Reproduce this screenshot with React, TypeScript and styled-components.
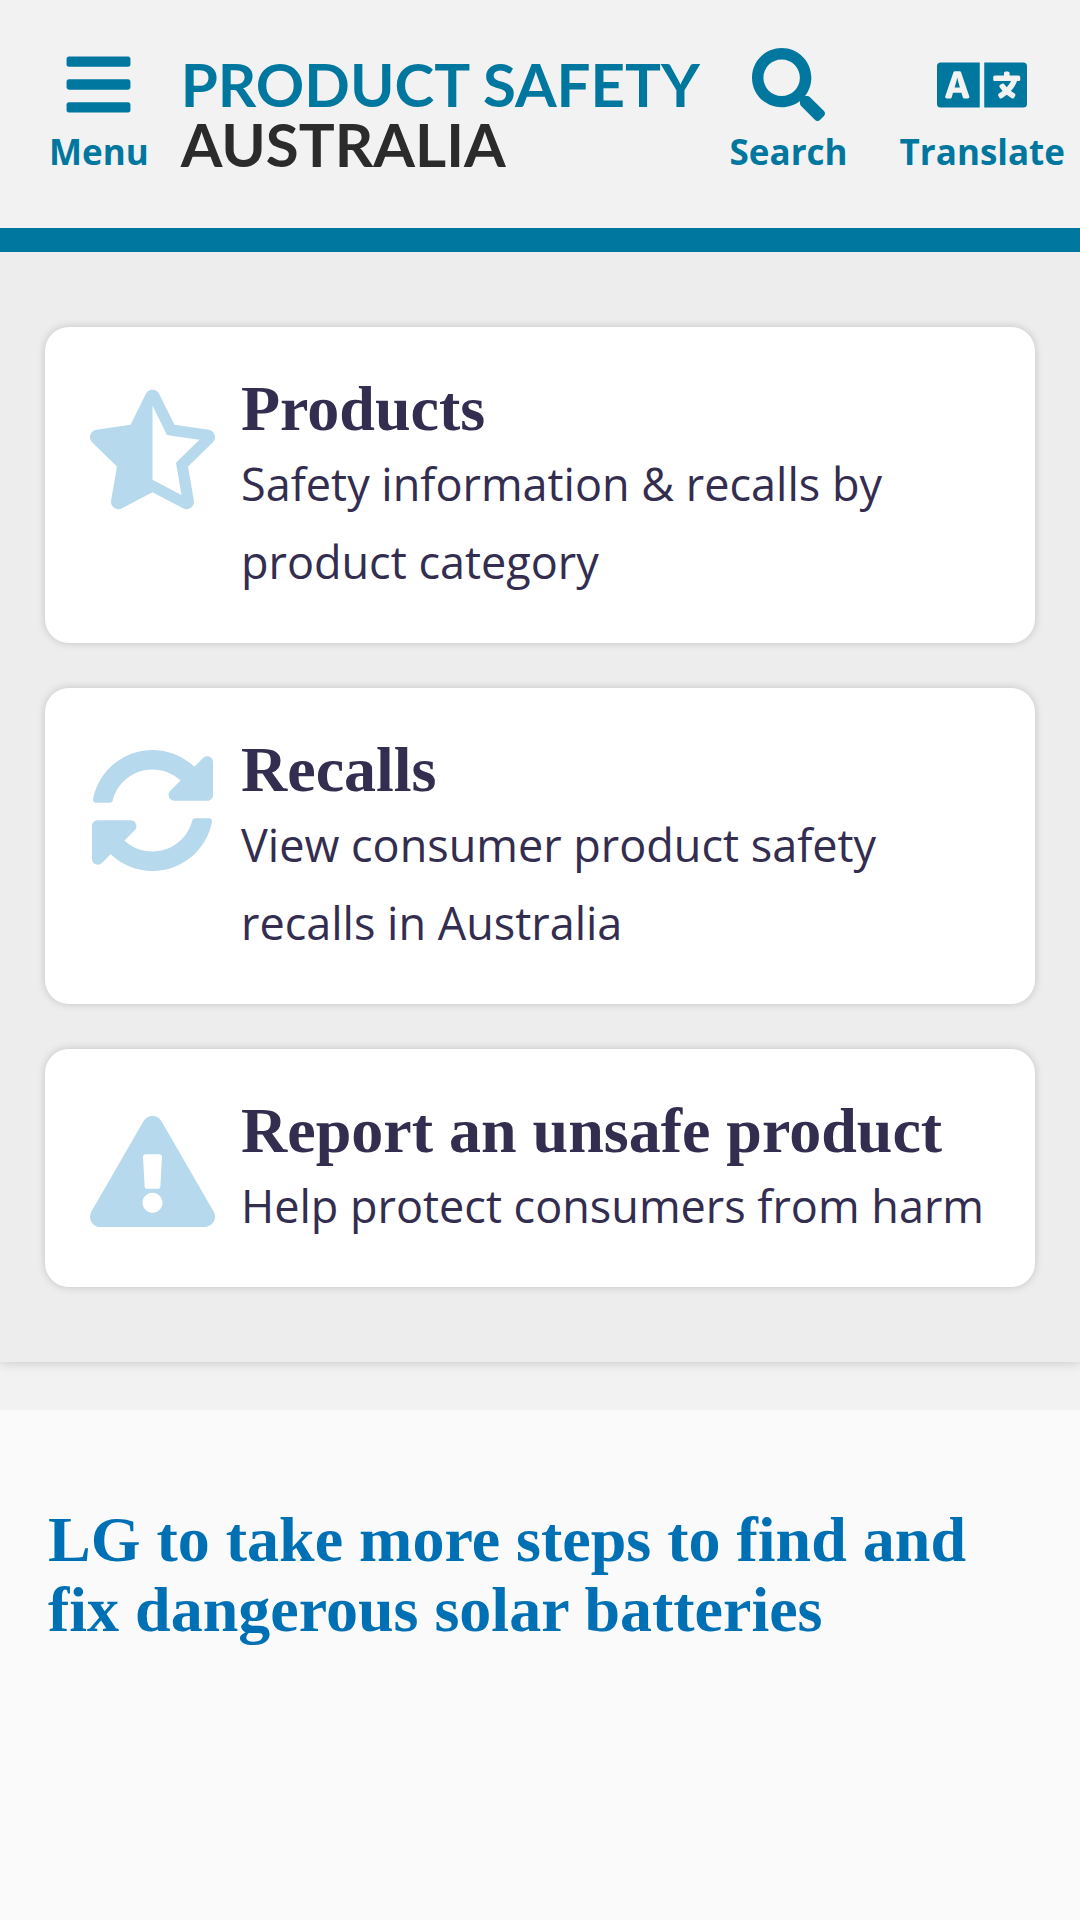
import React from "react";
import styled, { createGlobalStyle } from "styled-components";
import {
  FaBars,
  FaExclamationTriangle,
  FaLanguage,
  FaSearch,
  FaStarHalfAlt,
  FaSyncAlt,
} from "react-icons/fa";

const teal = "#00779e";
const ink = "#332d50";
const sans = '"Open Sans", "Noto Sans", sans-serif';
const serif = '"Liberation Serif", "Times New Roman", serif';

const GlobalStyle = createGlobalStyle`
  *, *::before, *::after {
    box-sizing: border-box;
  }

  body {
    margin: 0;
    background: #fafafa;
    color: ${ink};
    font-family: ${sans};
  }
`;

const Header = styled.header`
  display: flex;
  align-items: flex-start;
  padding: 48px 15px 49px 49px;
  background: #f2f2f2;
  border-bottom: 24px solid ${teal};
`;

const Logo = styled.a`
  display: flex;
  flex-direction: column;
  margin-left: 32px;
  padding-top: 6px;
  color: #2b2b2b;
  font-family: Lato, sans-serif;
  font-size: 60px;
  font-weight: 700;
  line-height: 60px;
  text-decoration: none;
  white-space: nowrap;
`;

const LogoName = styled.span`
  color: ${teal};
`;

const Tools = styled.div`
  display: flex;
  gap: 52px;
  margin-left: auto;
`;

const ToolButton = styled.button`
  display: flex;
  flex-direction: column;
  align-items: center;
  gap: 4px;
  padding: 0;
  border: 0;
  background: none;
  color: ${teal};
  font-family: ${sans};
  font-size: 35px;
  font-weight: 700;
  line-height: 54px;
  cursor: pointer;
`;

const ToolIcon = styled.span<{ $size: number }>`
  display: flex;
  align-items: center;
  justify-content: center;
  height: 73px;
  font-size: ${({ $size }) => $size}px;
`;

const Hero = styled.nav`
  position: relative;
  display: flex;
  flex-direction: column;
  gap: 45px;
  padding: 75px 45px;
  background: #ededed;
  box-shadow: 0 0 12px rgba(0, 0, 0, 0.2);
  clip-path: inset(0 0 -24px 0);
`;

const Card = styled.a`
  display: flex;
  align-items: flex-start;
  gap: 26px;
  padding: 46px 45px 42px;
  border-radius: 24px;
  background: #ffffff;
  box-shadow: 0 0 9px rgba(0, 0, 0, 0.18);
  color: ${ink};
  text-decoration: none;
`;

const CardIcon = styled.span`
  display: flex;
  flex: none;
  align-items: center;
  justify-content: center;
  width: 125px;
  height: 125px;
  margin: 14px 0 -14px;
  color: #b7d9ed;

  svg {
    width: 100%;
    height: auto;
  }
`;

const CardBody = styled.div`
  flex: 1;
  min-width: 0;
`;

const CardTitle = styled.h2`
  margin: 0;
  font-family: ${serif};
  font-size: 64px;
  font-weight: 700;
  line-height: 72px;
`;

const CardText = styled.p`
  margin: 0;
  font-size: 45px;
  line-height: 78px;
`;

const Divider = styled.div`
  height: 48px;
  background: #f2f2f2;
`;

const News = styled.main`
  padding: 95px 48px;
`;

const NewsTitle = styled.h1`
  margin: 0;
  font-family: ${serif};
  font-size: 64px;
  font-weight: 700;
  line-height: 70px;

  a {
    color: #0070b5;
    text-decoration: none;
  }
`;

const cards = [
  {
    title: "Products",
    text: "Safety information & recalls by product category",
    Icon: FaStarHalfAlt,
  },
  {
    title: "Recalls",
    text: "View consumer product safety recalls in Australia",
    Icon: FaSyncAlt,
  },
  {
    title: "Report an unsafe product",
    text: "Help protect consumers from harm",
    Icon: FaExclamationTriangle,
  },
];

export default function App() {
  return (
    <>
      <GlobalStyle />
      <Header>
        <ToolButton type="button">
          <ToolIcon $size={73}>
            <FaBars aria-hidden />
          </ToolIcon>
          Menu
        </ToolButton>
        <Logo href="#home">
          <LogoName>PRODUCT SAFETY</LogoName>
          <span>AUSTRALIA</span>
        </Logo>
        <Tools>
          <ToolButton type="button">
            <ToolIcon $size={73}>
              <FaSearch aria-hidden />
            </ToolIcon>
            Search
          </ToolButton>
          <ToolButton type="button">
            <ToolIcon $size={90}>
              <FaLanguage aria-hidden />
            </ToolIcon>
            Translate
          </ToolButton>
        </Tools>
      </Header>
      <Hero aria-label="Main sections">
        {cards.map(({ title, text, Icon }) => (
          <Card key={title} href="#section">
            <CardIcon>
              <Icon aria-hidden />
            </CardIcon>
            <CardBody>
              <CardTitle>{title}</CardTitle>
              <CardText>{text}</CardText>
            </CardBody>
          </Card>
        ))}
      </Hero>
      <Divider />
      <News>
        <NewsTitle>
          <a href="#news">
            LG to take more steps to find and fix dangerous solar batteries
          </a>
        </NewsTitle>
      </News>
    </>
  );
}
